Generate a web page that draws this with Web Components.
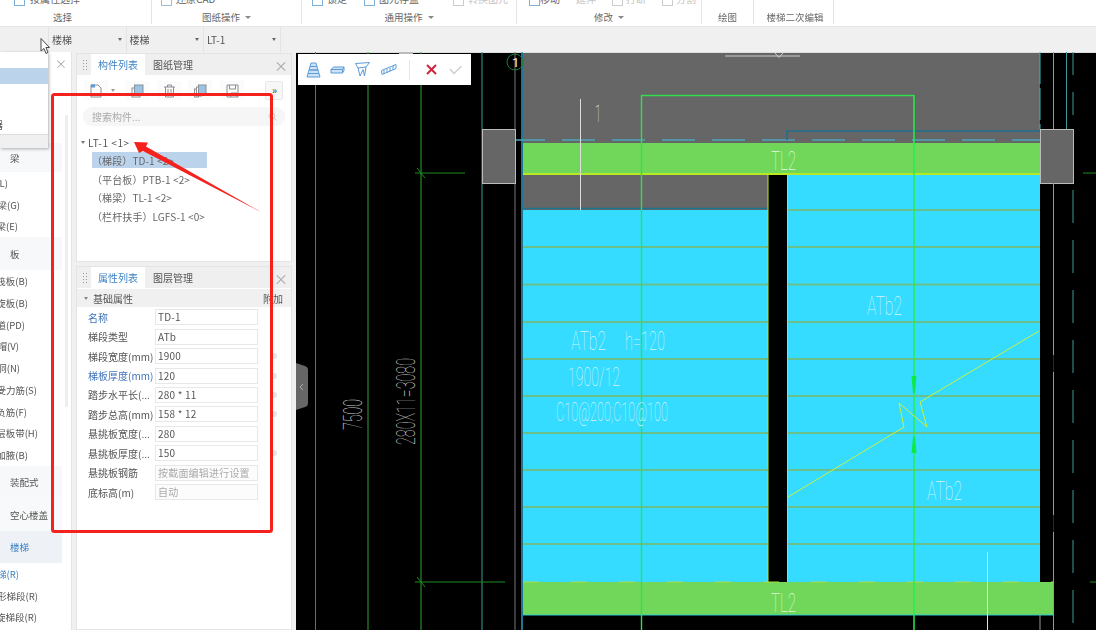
<!DOCTYPE html>
<html lang="zh">
<head>
<meta charset="utf-8">
<title>楼梯二次编辑</title>
<style>
    html, body { margin: 0; padding: 0; background: #f0f0f0; overflow: hidden; }
    body { width: 1096px; height: 630px; font-family: "Noto Sans CJK SC", "Noto Sans", sans-serif; font-size: 10px; color: #555; }
    #app { position: relative; width: 1096px; height: 630px; overflow: hidden; display: flex; flex-direction: column; filter: blur(0.35px); }
    #main { display: flex; flex: 1; min-height: 0; }
</style>
</head>
<body>
<div id="app">
    <cad-ribbon></cad-ribbon>
    <cad-selectbar></cad-selectbar>
    <div id="main">
        <cad-nav></cad-nav>
        <cad-sidebar>
            <cad-panel tab1="构件列表" tab2="图纸管理" style="height:209px"><cad-tree></cad-tree></cad-panel>
            <cad-panel tab1="属性列表" tab2="图层管理" style="flex:1"><cad-props></cad-props></cad-panel>
        </cad-sidebar>
        <cad-canvas></cad-canvas>
    </div>
    <cad-dropdown></cad-dropdown>
    <cad-annotation></cad-annotation>
</div>

<script>
// Ribbon across the top, cut off by the video frame
class CadRibbon extends HTMLElement {
    constructor() {
        super();
        this.attachShadow({ mode: 'open' });
    }

    connectedCallback() {
        const box = (c) => `<svg width="11" height="9" viewBox="0 0 11 9" fill="none" stroke="${c}"><rect x=".5" y="-4" width="10" height="12.5"/></svg>`;
        const groups = [
            { w: 152, pad: 14, tools: [[box('#7fb0dc'), '按属性选择', 5]], label: '选择', shift: 26 },
            { w: 150, pad: 9, tools: [[box('#9dbcd8'), '还原CAD', 4]], label: '图纸操作', caret: 1 },
            { w: 215, pad: 10, tools: [[box('#7fb0dc'), '锁定', 4, 0, 17], [box('#7fb0dc'), '图元存盘', 4, 0, 34], [box('#ccc'), '转换图元', 4, 1]], label: '通用操作', caret: 1 },
            { w: 185, pad: 12, gap: 16, tools: [[box('#7fb0dc'), '移动', 0], ['', '延伸', 0, 1], [box('#ccc'), '打断', 3, 1], [box('#ccc'), '分割', 3, 1]], label: '修改', caret: 1 },
            { w: 52, pad: 7, tools: [['', '··', 0, 1]], label: '绘图' },
            { w: 80, pad: 0, tools: [], label: '楼梯二次编辑', shift: -3 }
        ];
        const html = groups.map((g) => `
            <div class="group" style="width:${g.w}px">
                <div class="tools" style="padding-left:${g.pad}px;gap:${g.gap || 0}px">
                    ${g.tools.map((t) => `<span class="tool${t[3] ? ' off' : ''}" style="gap:${t[2]}px;margin-right:${t[4] || 0}px">${t[0]}<span>${t[1]}</span></span>`).join('')}
                </div>
                <div class="label" style="padding-right:${g.shift > 0 ? g.shift : 0}px;padding-left:${g.shift < 0 ? -g.shift : 0}px">${g.label}${g.caret ? '<i></i>' : ''}</div>
            </div>`).join('');
        this.shadowRoot.innerHTML = `
            <style>
                :host { display: flex; height: 27px; background: #fff; border-bottom: 1px solid #e6e6e6; box-sizing: border-box; flex: none; }
                .group { height: 24px; border-right: 1px solid #e4e4e4; box-sizing: border-box; display: flex; flex-direction: column; flex: none; }
                .tools { height: 6px; display: flex; overflow: hidden; }
                .tool { display: flex; align-items: flex-end; white-space: nowrap; line-height: 14px; margin-top: -8px; height: 14px; color: #666; }
                .tool.off { color: #c4c4c4; }
                .label { margin-top: 5px; height: 13px; line-height: 13px; display: flex; justify-content: center; align-items: center; gap: 5px; color: #666; font-size: 9.5px; }
                .label i { width: 0; height: 0; border: 3px solid transparent; border-top: 3px solid #888; border-bottom: 0; }
            </style>
            ${html}`;
    }
}
customElements.define('cad-ribbon', CadRibbon);

// Floor / type / member selects
class CadSelectbar extends HTMLElement {
    constructor() {
        super();
        this.attachShadow({ mode: 'open' });
    }

    connectedCallback() {
        const cells = ['楼梯', '楼梯', 'LT-1'];
        this.shadowRoot.innerHTML = `
            <style>
                :host { display: flex; height: 25px; flex: none; background: #f0f0f0; padding-left: 48px; box-sizing: border-box; }
                .cell { width: 77.5px; box-sizing: border-box; border-left: 1px solid #e3e3e3; display: flex; align-items: center; justify-content: space-between; padding: 0 4px 0 3px; color: #555; }
                .cell:last-child { border-right: 1px solid #e3e3e3; width: 78px; }
                i { width: 0; height: 0; border: 2.5px solid transparent; border-top: 3px solid #666; border-bottom: 0; }
            </style>
            ${cells.map((c) => `<div class="cell"><span>${c}</span><i></i></div>`).join('')}`;
    }
}
customElements.define('cad-selectbar', CadSelectbar);

// Left column of drawing element types, partly clipped at the window edge
class CadNav extends HTMLElement {
    constructor() {
        super();
        this.attachShadow({ mode: 'open' });
    }

    connectedCallback() {
        const rows = [
            ['spacer', 91], ['cat', '梁', 29],
            ['item', '(L)', 8], ['item', '梁(G)', 20], ['item', '梁(E)', 18],
            ['cat', '板', 33],
            ['item', '筏板(B)', 28], ['item', '旋板(B)', 28], ['item', '道(PD)', 25], ['item', '帽(V)', 19], ['item', '洞(N)', 20],
            ['item', '受力筋(S)', 37], ['item', '负筋(F)', 27], ['item', '层板带(H)', 38], ['item', '加腋(B)', 28],
            ['cat', '装配式', 32], ['cat', '空心楼盖', 33, 'plain'], ['cat', '楼梯', 32, 'on'],
            ['item', '梯(R)', 19, 'on'], ['item', '形梯段(R)', 38], ['item', '旋梯段(R)', 37]
        ];
        const html = rows.map((r) => {
            if (r[0] === 'spacer') return `<div style="height:${r[1]}px"></div>`;
            if (r[0] === 'cat') return `<div class="cat ${r[3] || ''}" style="height:${r[2]}px">${r[1]}</div>`;
            return `<div class="item ${r[3] || ''}" style="width:${r[2]}px"><span>${r[1]}</span></div>`;
        }).join('');
        this.shadowRoot.innerHTML = `
            <style>
                :host { display: block; width: 72px; flex: none; background: #fff; border-right: 1px solid #e4e4e4; box-sizing: border-box; position: relative; overflow: hidden; font-size: 9.5px; }
                .cat { width: 62px; box-sizing: border-box; padding-left: 10px; display: flex; align-items: center; background: #f6f8fa; color: #555; white-space: nowrap; }
                .cat.plain { background: #f8f9fa; }
                .cat.on { background: #eef1f5; color: #3d82c4; }
                .item { height: 21.75px; display: flex; justify-content: flex-end; align-items: center; white-space: nowrap; color: #555; }
                .item.on { color: #3d82c4; }
                .close { position: absolute; left: 55px; top: 7px; color: #aaa; font-size: 12px; line-height: 10px; }
                .bar { position: absolute; left: 65px; top: 63px; width: 3px; height: 292px; background: #eee; }
            </style>
            ${html}
            <span class="close">×</span>
            <div class="bar"></div>`;
    }
}
customElements.define('cad-nav', CadNav);

class CadSidebar extends HTMLElement {
    constructor() {
        super();
        this.attachShadow({ mode: 'open' });
    }

    connectedCallback() {
        this.shadowRoot.innerHTML = `
            <style>
                :host { display: flex; flex-direction: column; gap: 4px; width: 224px; flex: none; padding: 1px 4px 0 4px; box-sizing: border-box; background: #f0f0f0; }
            </style>
            <slot></slot>`;
    }
}
customElements.define('cad-sidebar', CadSidebar);

// Docking panel: grip, two tabs, close button, body in the slot
class CadPanel extends HTMLElement {
    constructor() {
        super();
        this.attachShadow({ mode: 'open' });
    }

    connectedCallback() {
        this.shadowRoot.innerHTML = `
            <style>
                :host { display: flex; flex-direction: column; background: #fff; border: 1px solid #e4e4e4; box-sizing: border-box; min-height: 0; overflow: hidden; }
                .head { display: flex; align-items: stretch; height: 21px; background: #efefef; flex: none; padding-left: 5px; }
                .grip { width: 5px; margin: 5px 4px 4px 0; background-image: radial-gradient(#999 0.8px, transparent 1px); background-size: 3px 3px; }
                .tab { display: flex; align-items: center; justify-content: center; width: 54px; }
                .tab.on { background: #fff; color: #3d82c4; }
                .tab.off { color: #555; margin-left: 1px; }
                .close { margin-left: auto; margin-right: 3px; align-self: center; color: #aaa; font-size: 14px; line-height: 14px; }
                .body { flex: 1; min-height: 0; }
            </style>
            <div class="head">
                <div class="grip"></div>
                <div class="tab on">${this.getAttribute('tab1')}</div>
                <div class="tab off">${this.getAttribute('tab2')}</div>
                <span class="close">×</span>
            </div>
            <div class="body"><slot></slot></div>`;
    }
}
customElements.define('cad-panel', CadPanel);

// Member list: icon row, search box and tree
class CadTree extends HTMLElement {
    constructor() {
        super();
        this.attachShadow({ mode: 'open' });
    }

    connectedCallback() {
        const s = '#8a8f96';
        const b = '#9cc3e6';
        const icons = [
            `<path d="M1 1h7l3 3v9H1z" stroke="${s}"/><rect x="1" y="0.5" width="4" height="3" fill="#5b9bd8"/>`,
            `<rect x="1" y="4" width="8" height="9" stroke="${s}"/><rect x="3.5" y="1" width="8.5" height="9" fill="${b}" stroke="${s}"/>`,
            `<path d="M1 3h11M4.5 3V1h4v2M2.5 3v10h8V3M5 5v6M8 5v6" stroke="${s}"/>`,
            `<rect x="0.5" y="5" width="4" height="8" stroke="${s}"/><rect x="2.5" y="3" width="5" height="9" fill="#fff" stroke="${s}"/><rect x="4.5" y="1" width="7.5" height="9" fill="${b}" stroke="${s}"/>`,
            `<path d="M1 1h11v12H1zM3.5 1v4h6V1M5 13V9h6v4" stroke="${s}"/>`
        ];
        const lefts = [0, 10, 8, 7, 8];
        const tree = [
            ['（梯段）TD-1 &lt;2&gt;', 1], ['（平台板）PTB-1 &lt;2&gt;'], ['（梯梁）TL-1 &lt;2&gt;'], ['（栏杆扶手）LGFS-1 &lt;0&gt;']
        ];
        this.shadowRoot.innerHTML = `
            <style>
                :host { display: block; }
                .tools { display: flex; align-items: center; height: 19px; margin-top: 6px; padding-left: 7px; position: relative; }
                .btn { width: 24px; height: 19px; background: #fbfbfb; display: flex; align-items: center; justify-content: center; flex: none; }
                .btn svg { display: block; }
                .caret { width: 0; height: 0; border: 2.5px solid transparent; border-top: 3px solid #999; border-bottom: 0; margin-left: 3px; flex: none; }
                .more { position: absolute; left: 188px; top: 0; width: 18px; height: 19px; border: 1px solid #e8e8e8; box-sizing: border-box; border-radius: 2px; background: #f7f7f7; color: #333; font-size: 10px; line-height: 16px; text-align: center; letter-spacing: -1px; }
                .search { margin: 7px 6px 0 6px; height: 19px; border-radius: 9px; background: #f6f6f6; display: flex; align-items: center; justify-content: space-between; padding: 0 8px 0 9px; color: #aaa; }
                .root { margin-top: 7px; height: 18px; display: flex; align-items: center; padding-left: 4px; gap: 3px; color: #555; letter-spacing: .55px; }
                .root i { width: 0; height: 0; border: 2px solid transparent; border-top: 3px solid #777; border-bottom: 0; }
                .node { height: 18.7px; display: flex; align-items: center; width: 115px; margin-left: 15px; padding-left: 3px; box-sizing: border-box; white-space: nowrap; color: #666; letter-spacing: .1px; }
                .node span { margin-left: -3px; }
                .node.on { background: #bcd3ec; height: 16px; margin-top: 1px; margin-bottom: 1.7px; border-radius: 1px; }
            </style>
            <div class="tools">
                ${icons.map((p, i) => `<div class="btn" style="margin-left:${lefts[i]}px"><svg width="13" height="14" viewBox="0 0 13 14" fill="none">${p}</svg></div>${i === 0 ? '<i class="caret"></i>' : ''}`).join('')}
                <div class="more">››</div>
            </div>
            <div class="search">
                <span>搜索构件...</span>
                <svg width="9" height="9" viewBox="0 0 9 9" fill="none" stroke="#ccc"><circle cx="4" cy="4" r="3"/><path d="M6.5 6.5L8.5 8.5"/></svg>
            </div>
            <div class="root"><i></i><span>LT-1 &lt;1&gt;</span></div>
            ${tree.map((n) => `<div class="node${n[1] ? ' on' : ''}"><span>${n[0]}</span></div>`).join('')}`;
    }
}
customElements.define('cad-tree', CadTree);

// Property grid
class CadProps extends HTMLElement {
    constructor() {
        super();
        this.attachShadow({ mode: 'open' });
    }

    connectedCallback() {
        const rows = [
            ['名称', 'TD-1', 'blue'],
            ['梯段类型', 'ATb'],
            ['梯段宽度(mm)', '1900', '', 1],
            ['梯板厚度(mm)', '120', 'blue', 1],
            ['踏步水平长(...', '280 * 11', '', 1],
            ['踏步总高(mm)', '158 * 12', '', 1],
            ['悬挑板宽度(...', '280'],
            ['悬挑板厚度(...', '150', '', 1],
            ['悬挑板钢筋', '按截面编辑进行设置', 'ghost'],
            ['底标高(m)', '自动', 'ghost']
        ];
        this.shadowRoot.innerHTML = `
            <style>
                :host { display: block; }
                .group { height: 18px; margin-top: 1px; background: #f0f0f0; display: flex; align-items: center; padding-left: 7px; color: #555; }
                .group i { width: 0; height: 0; border: 2px solid transparent; border-top: 3px solid #888; border-bottom: 0; margin-right: 5px; }
                .group b { margin-left: auto; margin-right: 8px; font-weight: 400; }
                .rows { padding-top: .5px; }
                .row { height: 19.45px; display: grid; grid-template-columns: 67px 103px 19px; align-items: center; padding-left: 11px; }
                .name { white-space: nowrap; color: #555; }
                .name.blue { color: #3f74bb; }
                .val { height: 16px; border: 1px solid #e8e8e8; box-sizing: border-box; padding-left: 2px; line-height: 14px; color: #555; white-space: nowrap; overflow: hidden; letter-spacing: .2px; }
                .val.ghost { color: #aaa; background: #fcfcfc; }
                .dot { width: 6px; height: 6px; border-radius: 50%; background: #e6e6e6; justify-self: end; }
            </style>
            <div class="group"><i></i><span>基础属性</span><b>附加</b></div>
            <div class="rows">
                ${rows.map((r) => `
                    <div class="row">
                        <span class="name ${r[2] === 'blue' ? 'blue' : ''}">${r[0]}</span>
                        <span class="val ${r[2] === 'ghost' ? 'ghost' : ''}">${r[1]}</span>
                        ${r[3] ? '<span class="dot"></span>' : '<span></span>'}
                    </div>`).join('')}
            </div>`;
    }
}
customElements.define('cad-props', CadProps);

// Drawing canvas. The viewBox uses page coordinates so numbers read off the picture directly
class CadCanvas extends HTMLElement {
    constructor() {
        super();
        this.attachShadow({ mode: 'open' });
    }

    connectedCallback() {
        const line = (x1, y1, x2, y2, c, w = 1, extra = '') => `<line x1="${x1}" y1="${y1}" x2="${x2}" y2="${y2}" stroke="${c}" stroke-width="${w}" ${extra}/>`;
        const label = (x, y, len, size, t, c = '#d4f4fc') => `<text x="${x}" y="${y}" textLength="${len}" lengthAdjust="spacingAndGlyphs" font-size="${size}" fill="${c}">${t}</text>`;

        let steps = '';
        [247, 284.5, 322, 359, 396, 433, 470, 507, 544].forEach((y) => {
            steps += line(523, y, 768, y, '#69c08a', 2);
        });
        [210, 247, 284.5, 322, 359, 396, 433, 470, 507, 544].forEach((y) => {
            steps += line(788, y, 1040, y, '#69c08a', 2);
        });

        const green = '#2fa52f';
        this.shadowRoot.innerHTML = `
            <style>
                :host { display: block; flex: 1; position: relative; background: #000; overflow: hidden; }
                svg.draw { display: block; width: 800px; height: 578px; }
                text { font-family: Roboto, "Liberation Sans", sans-serif; font-weight: 100; }
                .tools { position: absolute; left: 2px; top: 2px; width: 173px; height: 31px; background: #fff; display: flex; align-items: center; padding-left: 8px; box-sizing: border-box; }
                .tools svg { display: block; flex: none; }
                .div { width: 1px; height: 20px; background: #e6e6e6; margin: 0 16px 0 12px; }
                .handle { position: absolute; left: 0; top: 311px; }
            </style>
            <svg class="draw" viewBox="296 52 800 578" xmlns="http://www.w3.org/2000/svg">
                <rect x="296" y="52" width="800" height="578" fill="#000"/>
                <rect x="296" y="52" width="800" height="1" fill="#ddd"/>
                <rect x="399" y="52" width="14" height="2" fill="#bbb"/>

                ${line(315.5, 52, 315.5, 630, '#3a8f3a')}
                ${line(368, 52, 368, 630, green)}
                ${line(421, 52, 421, 630, green)}
                ${line(482, 52, 482, 630, '#3b9c9c')}
                ${line(515, 52, 515, 630, '#777')}
                ${line(522, 52, 522, 630, '#2a9cc0', 1.5)}
                ${line(415, 173, 465, 173, '#1f8a1f')}
                ${line(417, 168, 425, 178, '#1f8a1f')}
                ${line(415, 582, 505, 582, '#1f8a1f')}
                ${line(417, 577, 425, 587, '#1f8a1f')}

                <rect x="523" y="53" width="517" height="157" fill="#666"/>
                <rect x="482.5" y="129.5" width="33" height="54" fill="#666" stroke="#bbb"/>
                <rect x="1040.5" y="129.5" width="33" height="54" fill="#666" stroke="#bbb"/>
                <circle cx="515" cy="62" r="8" fill="none" stroke="#1c7a3a"/>
                <text x="512" y="66.5" font-size="13" fill="#eee" style="font-weight:400">1</text>

                <rect x="788" y="175" width="252" height="407" fill="#35dcff"/>
                <rect x="523" y="210" width="245" height="372" fill="#35dcff"/>
                <rect x="768" y="175" width="20" height="407" fill="#000"/>
                <rect x="523" y="143" width="517" height="31" fill="#70d75a"/>
                <rect x="523" y="582" width="530" height="33" fill="#70d75a"/>
                ${line(523, 174, 1040, 174, '#b7ea22', 2)}
                ${line(523, 208.5, 768, 208.5, '#1e7391', 1.5)}
                ${line(523, 615, 1053, 615, '#2fc8d0')}
                ${line(523, 582, 1053, 582, '#a8e040', 1, 'stroke-dasharray="16 32"')}
                ${line(768, 175, 768, 582, '#b7ea22')}
                ${line(787.5, 175, 787.5, 582, '#b7ea22')}
                ${steps}

                ${line(516, 140, 1040, 140, '#4aa8b8', 1.5, 'stroke-dasharray="33 17" stroke-dashoffset="4"')}
                <path d="M787 140V131H1040" fill="none" stroke="#1f7090" stroke-width="1.5"/>
                ${line(1040, 52, 1040, 129, '#3bb5b5', 1, 'stroke-dasharray="32 4"')}
                ${line(1053.5, 52, 1053.5, 129, '#999')}
                ${line(1053.5, 183, 1053.5, 630, '#999')}
                ${line(1053.5, 355, 1053.5, 372, '#5a1020')}
                ${line(1053.5, 515, 1053.5, 532, '#5a1020')}
                ${line(1066.5, 52, 1066.5, 129, '#3b9c9c')}
                ${line(1073, 52, 1073, 122, '#3b9c9c', 1, 'stroke-dasharray="23 17"')}
                ${line(1073, 190, 1073, 630, '#3b9c9c', 1, 'stroke-dasharray="33 17"')}
                ${line(1040, 615, 1040, 630, '#999')}
                ${line(1083, 173, 1096, 173, '#1f8a1f')}
                ${line(1090, 582, 1096, 582, '#1f8a1f')}

                ${line(725, 56, 800, 56, '#ccc')}
                <path d="M775 53L779 57.5L783 53" fill="none" stroke="#ccc"/>
                ${line(580.5, 99, 580.5, 210, '#ddd')}
                ${label(595, 122, 6, 24, '1', '#eee')}
                <path d="M641.5 630V95.5H914" fill="none" stroke="#2fe04a" stroke-width="1.4"/>
                ${line(914, 95, 914, 630, '#22f04a', 1.5)}

                <path d="M788 497L904 427L899 403L927 427L920 402L1039 331" fill="none" stroke="#c8f040"/>
                <path d="M911.5 376H916.5L915 393H913Z" fill="#0bea47"/>
                <path d="M913 437H915L916.5 453H911.5Z" fill="#0bea47"/>
                ${line(987.5, 552, 987.5, 630, '#e4e4e4')}

                ${label(771, 170, 25, 26, 'TL2', '#e4f8dc')}
                ${label(771, 612, 25, 26, 'TL2', '#e4f8dc')}
                ${label(867, 315, 35, 25, 'ATb2')}
                ${label(927, 500, 35, 25, 'ATb2')}
                ${label(571, 350, 35, 25, 'ATb2')}
                ${label(625, 350, 40, 25, 'h=120')}
                ${label(568, 386, 52, 25, '1900/12')}
                ${label(556, 421, 112, 25, 'C10@200;C10@100')}
                <g transform="translate(362 430) rotate(-90)">${label(0, 0, 31, 25, '7500', '#ccc')}</g>
                <g transform="translate(415 445) rotate(-90)">${label(0, 0, 87, 25, '280X11=3080', '#ccc')}</g>
            </svg>

            <div class="tools">
                <svg width="15" height="16" viewBox="0 0 15 16" fill="#cfe2f5" stroke="#5b9bd8" style="margin-right:9px"><path d="M5 1h5l1 3.5H4zM4 4.5h7l1 3.5H3zM3 8h9l1 3.5H2zM2 11.5h11l1 3.5H1z"/></svg>
                <svg width="15" height="8" viewBox="0 0 15 8" fill="#cfe2f5" stroke="#5b9bd8" style="margin-right:10px"><path d="M1 3.5L3.5 1H14v3.5L12.5 7H1zM1 3.5h11.5V7M12.5 3.5L14 1"/></svg>
                <svg width="15" height="15" viewBox="0 0 15 15" fill="#fff" stroke="#5b9bd8" style="margin-right:11px"><path d="M.5 1.5L14.5 .5L11 5L9.5 14L8 7.5L5 14L3 6zM3 6L11 5"/></svg>
                <svg width="16" height="13" viewBox="0 0 16 13" fill="none" stroke="#5b9bd8"><path d="M.5 7.5L15 1.5L15 5.5L1 11.5zM3 7v4M6 5.5v4.5M9 4.5v4M12 3v4"/></svg>
                <div class="div"></div>
                <svg width="11" height="11" viewBox="0 0 11 11" fill="none" stroke="#d0243c" stroke-width="2" style="margin-right:12px"><path d="M1 1L10 10M10 1L1 10"/></svg>
                <svg width="13" height="10" viewBox="0 0 13 10" fill="none" stroke="#ccc" stroke-width="1.3"><path d="M1 4L5 8.5L12.5 1"/></svg>
            </div>

            <svg class="handle" width="12" height="47" viewBox="0 0 12 47">
                <path d="M0 0L9 3Q12 4 12 7V40Q12 43 9 44L0 47Z" fill="#666"/>
                <path d="M7 21L4 24L7 27" fill="none" stroke="#aaa"/>
            </svg>`;
    }
}
customElements.define('cad-canvas', CadCanvas);

// Open floor dropdown lying over the nav column
class CadDropdown extends HTMLElement {
    constructor() {
        super();
        this.attachShadow({ mode: 'open' });
    }

    connectedCallback() {
        this.shadowRoot.innerHTML = `
            <style>
                :host { position: absolute; left: 0; top: 52px; width: 48px; height: 96px; background: #fff; box-shadow: 1px 1px 3px rgba(0,0,0,.3); display: flex; flex-direction: column; }
                .sel { margin-top: 16px; height: 16px; background: #bcd3ec; }
                .txt { margin-top: 32px; height: 16px; width: 3px; display: flex; justify-content: flex-end; align-items: center; overflow: hidden; color: #555; white-space: nowrap; }
                .foot { margin-top: auto; height: 14px; background: #f0f0f0; border-top: 1px solid #ddd; box-sizing: border-box; }
            </style>
            <div class="sel"></div>
            <div class="txt"><span>器</span></div>
            <div class="foot"></div>`;
    }
}
customElements.define('cad-dropdown', CadDropdown);

// Red marks drawn on top of the screen recording, plus the mouse pointer
class CadAnnotation extends HTMLElement {
    constructor() {
        super();
        this.attachShadow({ mode: 'open' });
    }

    connectedCallback() {
        this.shadowRoot.innerHTML = `
            <style>
                :host { position: absolute; inset: 0; pointer-events: none; }
                svg { display: block; }
            </style>
            <svg width="1096" height="630" viewBox="0 0 1096 630">
                <rect x="52.5" y="94.5" width="219" height="437" rx="2" fill="none" stroke="#f5211d" stroke-width="3"/>
                <path d="M134 142L148 142.5L146 146.5L261 212L143 151L139 153Z" fill="#f5211d"/>
                <path d="M41 38.5V51L44 48.5L46 53.5L48 52.5L46 47.5H49.5Z" fill="#fff" stroke="#333" stroke-width=".9"/>
            </svg>`;
    }
}
customElements.define('cad-annotation', CadAnnotation);
</script>
</body>
</html>
